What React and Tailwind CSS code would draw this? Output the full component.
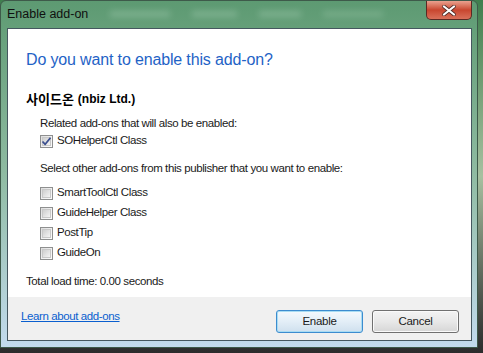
import React from 'react';

const font = { fontFamily: '"Liberation Sans", "Noto Sans CJK KR", Arial, sans-serif' };

const CheckBox = ({ checked }) => (
  <span className="relative w-[13px] h-[13px] shrink-0 border border-[#8e8f8f] bg-gradient-to-br from-[#dcdcdc] via-[#f0f0f0] to-[#fbfbfb] flex items-center justify-center">
    <span className="w-[9px] h-[9px] border border-[#c8c8c8] bg-gradient-to-br from-[#cfcfcf] to-[#f4f4f4] flex items-center justify-center">
      {checked && (
        <svg width="11" height="11" viewBox="0 0 11 11" className="shrink-0">
          <path d="M1.5 5.5 L4.2 8.3 L9.5 1.8" fill="none" stroke="#3b4f8f" strokeWidth="1.8" strokeLinejoin="round" />
        </svg>
      )}
    </span>
  </span>
);

const Row = ({ label, checked }) => (
  <div className="flex items-center gap-[4px] h-[20px] pl-[32px]">
    <CheckBox checked={checked} />
    <span className="text-[11.5px] text-[#1a1a1a] tracking-[-0.4px]">{label}</span>
  </div>
);

export default function App() {
  return (
    <div className="w-[483px] h-[353px] overflow-hidden bg-gradient-to-b from-[#3f7f4e] via-[#a7c0a0] to-[#2c2c2c]" style={font}>
      <div className="w-[478px] h-[348px] flex flex-col rounded-t-[6px] border border-[#3e5a4a] bg-gradient-to-b from-[#5d9a72] via-[#8fbba2] to-[#c3dbee]">
        {/* title bar */}
        <div className="h-[27px] flex items-start shrink-0">
          <div className="flex items-center h-[26px] pl-[6px] gap-[22px]">
            <span className="text-[12.5px] text-[#101010]">Enable add-on</span>
            <span className="w-[60px] h-[6px] bg-[#a9cfb5] blur-[3px] opacity-40" />
            <span className="w-[45px] h-[6px] bg-[#a9cfb5] blur-[3px] opacity-40" />
            <span className="w-[42px] h-[6px] bg-[#a9cfb5] blur-[3px] opacity-40" />
            <span className="w-[60px] h-[6px] bg-[#a9cfb5] blur-[3px] opacity-30" />
          </div>
          <div className="ml-auto mr-[5px] w-[46px] h-[19px] rounded-b-[5px] border border-t-0 border-[#5a2a24] bg-gradient-to-b from-[#e9a18f] via-[#c8462f] to-[#d9705a] flex items-center justify-center">
            <svg width="14" height="11" viewBox="0 0 14 11">
              <path d="M2 1.5 L12 9.5 M12 1.5 L2 9.5" stroke="#4a2a26" strokeWidth="3.6" strokeLinecap="round" />
              <path d="M2 1.5 L12 9.5 M12 1.5 L2 9.5" stroke="#ffffff" strokeWidth="2.2" strokeLinecap="round" />
            </svg>
          </div>
        </div>

        {/* client area */}
        <div className="flex-1 ml-[6px] mr-[5px] mb-[6px] border border-[#45575f] bg-white flex flex-col">
          <div className="flex-1 flex flex-col">
            <div className="mt-[21px] pl-[18px] h-[20px] text-[16px] leading-[20px] tracking-[-0.15px] text-[#1f63c6]">
              Do you want to enable this add-on?
            </div>
            <div className="mt-[21px] pl-[18px] h-[16px] flex items-center gap-[4px] text-[#000]">
              <span className="text-[13px] font-bold" style={{ fontFamily: '"Noto Sans CJK KR", sans-serif' }}>사이드온</span>
              <span className="text-[12px] font-bold">(nbiz Ltd.)</span>
            </div>
            <div className="mt-[9px] pl-[32px] h-[16px] flex items-center text-[11.5px] text-[#1a1a1a] tracking-[-0.4px]">
              Related add-ons that will also be enabled:
            </div>
            <div className="mt-[1px] h-[16px] flex items-center gap-[4px] pl-[32px]">
              <CheckBox checked />
              <span className="text-[11.5px] text-[#1a1a1a] tracking-[-0.4px]">SOHelperCtl Class</span>
            </div>
            <div className="mt-[12px] pl-[32px] h-[16px] flex items-center text-[11.5px] text-[#1a1a1a] tracking-[-0.4px]">
              Select other add-ons from this publisher that you want to enable:
            </div>
            <div className="mt-[6px] flex flex-col">
              <Row label="SmartToolCtl Class" />
              <Row label="GuideHelper Class" />
              <Row label="PostTip" />
              <Row label="GuideOn" />
            </div>
            <div className="mt-[11px] pl-[18px] h-[16px] flex items-center text-[11.5px] text-[#1a1a1a] tracking-[-0.4px]">
              Total load time: 0.00 seconds
            </div>
          </div>

          {/* footer */}
          <div className="h-[43px] bg-[#f0f0f0] flex items-center pl-[13px] pr-[12px]">
            <a className="text-[11.5px] text-[#0a5fcf] underline -mt-[4px] tracking-[-0.4px]">Learn about add-ons</a>
            <div className="ml-auto flex gap-[9px] mt-[6px]">
              <button className="w-[87px] h-[23px] rounded-[3px] border border-[#3c8ccf] bg-gradient-to-b from-[#f4f9fd] via-[#e3eef7] to-[#cfe0ee] text-[11.5px] text-[#1a1a1a] tracking-[-0.3px] shadow-[inset_0_0_0_1px_#a8dcf3]">
                Enable
              </button>
              <button className="w-[87px] h-[23px] rounded-[3px] border border-[#707070] bg-gradient-to-b from-[#f3f3f3] via-[#e8e8e8] to-[#d6d6d6] text-[11.5px] text-[#1a1a1a] tracking-[-0.3px] shadow-[inset_0_0_0_1px_#fafafa]">
                Cancel
              </button>
            </div>
          </div>
        </div>
      </div>
    </div>
  );
}
